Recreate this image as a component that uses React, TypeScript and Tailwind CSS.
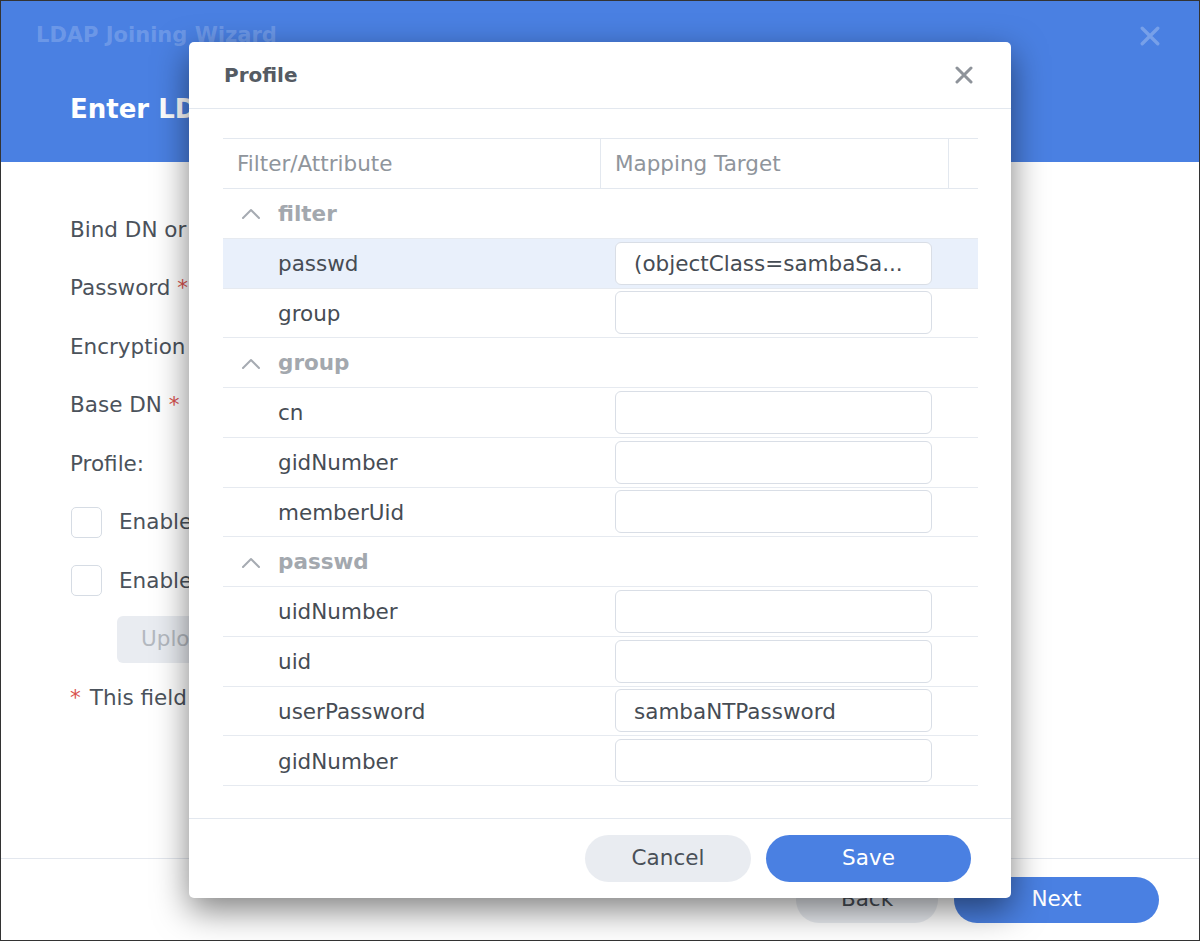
import React from 'react';

type Row =
  | { kind: 'group'; label: string }
  | { kind: 'item'; label: string; value?: string; active?: boolean };

const rows: Row[] = [
  { kind: 'group', label: 'filter' },
  { kind: 'item', label: 'passwd', value: '(objectClass=sambaSamAccount)', active: true },
  { kind: 'item', label: 'group' },
  { kind: 'group', label: 'group' },
  { kind: 'item', label: 'cn' },
  { kind: 'item', label: 'gidNumber' },
  { kind: 'item', label: 'memberUid' },
  { kind: 'group', label: 'passwd' },
  { kind: 'item', label: 'uidNumber' },
  { kind: 'item', label: 'uid' },
  { kind: 'item', label: 'userPassword', value: 'sambaNTPassword' },
  { kind: 'item', label: 'gidNumber' },
];

const CloseIcon: React.FC<{ className?: string; size?: number; stroke?: number }> = ({ className, size = 18, stroke = 3 }) => (
  <svg width={size} height={size} viewBox="0 0 18 18" className={className}>
    <path d="M2 2 L16 16 M16 2 L2 16" stroke="currentColor" strokeWidth={stroke} strokeLinecap="round" fill="none" />
  </svg>
);

const ChevronUp: React.FC = () => (
  <svg width="20" height="12" viewBox="0 0 20 12" className="text-[#a6abb2]">
    <polyline points="2,11 10,3 18,11" stroke="currentColor" strokeWidth="2" fill="none" strokeLinecap="round" strokeLinejoin="round" />
  </svg>
);

const FormRow: React.FC<{ children: React.ReactNode }> = ({ children }) => (
  <div className="h-[58.5px] flex items-center whitespace-nowrap pt-[1px]">{children}</div>
);

const App: React.FC = () => {
  return (
    <div className="relative w-[1200px] h-[941px] overflow-hidden border border-[#333] bg-white font-['DejaVu_Sans',sans-serif] text-[21.5px]">
      {/* Wizard behind the dialog */}
      <div className="flex flex-col h-full">
        <div className="h-[161px] bg-[#4a80e2] flex flex-col">
          <div className="h-[69px] flex items-center justify-between pl-[35px] pr-[39px]">
            <span className="text-[21px] font-bold text-white/20">LDAP Joining Wizard</span>
            <CloseIcon className="text-white/25" size={20} stroke={3} />
          </div>
          <div className="h-[78px] flex items-center pl-[69px]">
            <span className="text-[26px] font-bold text-white">Enter LD</span>
          </div>
        </div>

        <div className="flex-1 pl-[69px] pt-[38px] text-[#4b525b]">
          <div className="w-[119px] overflow-hidden">
            <FormRow>
              <span>Bind DN or</span>
            </FormRow>
            <FormRow>
              <span>Password <span className="text-[#d9534f]">*</span></span>
            </FormRow>
            <FormRow>
              <span>Encryption</span>
            </FormRow>
            <FormRow>
              <span>Base DN <span className="text-[#d9534f]">*</span></span>
            </FormRow>
            <FormRow>
              <span>Profile:</span>
            </FormRow>
            <FormRow>
              <div className="flex items-center gap-[17px]">
                <div className="w-[31px] h-[31px] ml-[1px] shrink-0 rounded-[5px] border border-[#d6dce4] bg-white" />
                <span>Enable</span>
              </div>
            </FormRow>
            <FormRow>
              <div className="flex items-center gap-[17px]">
                <div className="w-[31px] h-[31px] ml-[1px] shrink-0 rounded-[5px] border border-[#d6dce4] bg-white" />
                <span>Enable</span>
              </div>
            </FormRow>
            <FormRow>
              <div className="ml-[47px] h-[47px] w-[100px] shrink-0 pl-[24px] rounded-[6px] bg-[#e9ecf1] text-[#b4b9c0] flex items-center">
                Uplo
              </div>
            </FormRow>
            <FormRow>
              <span>
                <span className="text-[#d9534f]">*</span>
                <span className="ml-[9px]">This field</span>
              </span>
            </FormRow>
          </div>
        </div>

        <div className="h-[82px] border-t border-[#e3e7ee] flex items-center justify-end gap-[16px] pr-[40px]">
          <div className="w-[142px] h-[46px] rounded-full bg-[#e9ecf1] text-[#4a5058] flex items-center justify-center">
            Back
          </div>
          <div className="w-[205px] h-[46px] rounded-full bg-[#4a80e2] text-white flex items-center justify-center">
            Next
          </div>
        </div>
      </div>

      {/* Profile dialog */}
      <div className="absolute left-[188px] top-[41px] w-[822px] h-[856px] bg-white rounded-[5px] shadow-[0_12px_34px_rgba(0,0,0,0.5)] flex flex-col">
        <div className="h-[67px] shrink-0 border-b border-[#e3e8ef] flex items-center justify-between pl-[35px] pr-[38px]">
          <span className="text-[20px] font-bold text-[#555b63]">Profile</span>
          <CloseIcon className="text-[#8e939a]" size={18} stroke={3} />
        </div>

        <div className="flex-1 pt-[29px] pl-[34px] pr-[33px]">
          <div className="border-t border-[#e3e8ef]">
            <div className="flex h-[50px] border-b border-[#e3e8ef] text-[#8f959c]">
              <div className="w-[377px] pl-[14px] pt-[2px] flex items-center">Filter/Attribute</div>
              <div className="w-[348px] pl-[14px] pt-[2px] border-l border-[#e3e8ef] flex items-center">Mapping Target</div>
              <div className="flex-1 border-l border-[#e3e8ef]" />
            </div>
            {rows.map((row, i) =>
              row.kind === 'group' ? (
                <div key={i} className="flex items-center h-[49.75px] border-b border-[#e6eaf0]">
                  <div className="w-[55px] pl-[18px] flex items-center">
                    <ChevronUp />
                  </div>
                  <span className="pt-[1px] font-bold text-[#a3a8ae]">{row.label}</span>
                </div>
              ) : (
                <div
                  key={i}
                  className={
                    'flex items-center h-[49.75px] border-b border-[#e6eaf0] ' +
                    (row.active ? 'bg-[#e9f0fb]' : 'bg-white')
                  }
                >
                  <div className="w-[377px] pl-[55px] pt-[2px] text-[#464c54]">{row.label}</div>
                  <div className="pl-[15px]">
                    <div className="w-[317px] h-[43px] rounded-[6px] border border-[#d9dee6] bg-white pl-[18px] pt-[2px] flex items-center text-[#464c54] whitespace-nowrap">
                      {row.value && row.value.length > 20 ? row.value.slice(0, 20) + '...' : row.value ?? ''}
                    </div>
                  </div>
                </div>
              )
            )}
          </div>
        </div>

        <div className="h-[80px] shrink-0 border-t border-[#e3e8ef] flex items-center justify-end gap-[15px] pr-[40px]">
          <div className="w-[166px] h-[47px] rounded-full bg-[#e9ecf1] text-[#4a5058] flex items-center justify-center">
            Cancel
          </div>
          <div className="w-[205px] h-[47px] rounded-full bg-[#4a80e2] text-white flex items-center justify-center">
            Save
          </div>
        </div>
      </div>
    </div>
  );
};

export default App;
